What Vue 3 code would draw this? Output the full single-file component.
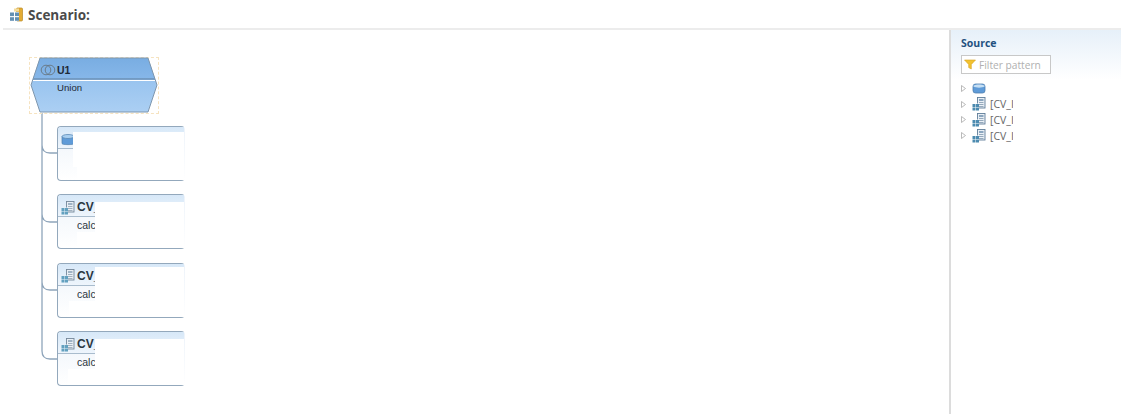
<script setup>
const cards = [
  { id: 'data', title: '', sub: '', icon: 'db' },
  { id: 'a', title: 'CV_', sub: 'calc', icon: 'calc' },
  { id: 'b', title: 'CV_', sub: 'calc', icon: 'calc' },
  { id: 'c', title: 'CV_', sub: 'calc', icon: 'calc' }
]

const sources = [
  { label: '', icon: 'db' },
  { label: '[CV_I', icon: 'calc' },
  { label: '[CV_I', icon: 'calc' },
  { label: '[CV_I', icon: 'calc' }
]
</script>

<template>
  <div class="page">
    <header class="title-bar">
      <svg class="title-icon" width="16" height="16" viewBox="0 0 16 16">
        <rect x="8.5" y="1" width="6" height="13" rx="1" fill="#e4ab32" stroke="#b98a25" stroke-width="0.7" />
        <rect x="6" y="1.5" width="5" height="3" fill="#f3dc9c" />
        <rect x="2" y="5" width="9" height="9" fill="#fff" />
        <g fill="#6390b3">
          <rect x="2" y="5.5" width="4" height="3.6" />
          <rect x="7" y="5.5" width="4" height="3.6" />
          <rect x="2" y="10.2" width="4" height="3.6" />
          <rect x="7" y="10.2" width="4" height="3.6" />
        </g>
      </svg>
      <span class="title-text">Scenario:</span>
    </header>

    <div class="workspace">
      <main class="canvas">
        <svg class="links" width="120" height="300" viewBox="0 0 120 300">
          <path
            d="M13 0V238Q13 246 21 246H28M13 32Q13 40 21 40H28M13 101Q13 109 21 109H28M13 169Q13 177 21 177H28"
            fill="none"
            stroke="#8fa5bb"
            stroke-width="1.3"
          />
        </svg>

        <div class="union">
          <svg class="union-shape" width="130" height="57" viewBox="0 0 130 57">
            <defs>
              <linearGradient id="unionLow" x1="0" y1="0" x2="0" y2="1">
                <stop offset="0" stop-color="#8cbcec" />
                <stop offset="1" stop-color="#abcff3" />
              </linearGradient>
              <linearGradient id="unionTop" x1="0" y1="0" x2="0" y2="1">
                <stop offset="0" stop-color="#79ade2" />
                <stop offset="1" stop-color="#86b7e9" />
              </linearGradient>
            </defs>
            <path d="M11 1H119L128 28L119 55H11L2 28Z" fill="url(#unionLow)" />
            <path d="M11 1H119L126 22H4Z" fill="url(#unionTop)" />
            <path d="M4 22H126" stroke="#5f7f9f" stroke-width="1" />
            <path d="M3 23.5H127" stroke="#fff" stroke-width="1.2" />
            <path d="M11 1H119L128 28L119 55H11L2 28Z" fill="none" stroke="#7f97ae" />
          </svg>
          <div class="union-head">
            <svg width="16" height="12" viewBox="0 0 16 12" fill="none" stroke="#66757f" stroke-width="0.9">
              <circle cx="6" cy="6" r="4.8" />
              <circle cx="10" cy="6" r="4.8" />
            </svg>
            <strong class="union-name">U1</strong>
          </div>
          <div class="union-sub">Union</div>
        </div>

        <div class="cards">
          <section v-for="card in cards" :key="card.id" class="card" :class="`card-${card.id}`">
            <div class="card-head">
              <svg v-if="card.icon === 'db'" class="card-icon db-icon" width="14" height="12" viewBox="0 0 14 12">
                <path d="M1 2.5V9.5C1 11 13 11 13 9.5V2.5Z" fill="#5f9bd8" stroke="#4f7fae" stroke-width="0.7" />
                <ellipse cx="7" cy="2.5" rx="6" ry="2" fill="#a9cff0" stroke="#4f7fae" stroke-width="0.7" />
              </svg>
              <svg v-else class="card-icon calc-icon" width="14" height="14" viewBox="0 0 14 14">
                <rect x="5.5" y="0.5" width="7.5" height="10.5" fill="#e9eff5" stroke="#74879a" stroke-width="0.9" />
                <rect x="7" y="2" width="4.5" height="2" fill="#9fb3c5" />
                <path d="M7 5.5h4.5M7 7.5h4.5M7 9.5h4.5" stroke="#8ea1b3" stroke-width="0.8" />
                <rect x="0" y="6.5" width="7" height="7.5" fill="#e6f0f9" />
                <g fill="#62a0bf">
                  <rect x="0.5" y="7" width="3" height="3" />
                  <rect x="4" y="7" width="3" height="3" />
                  <rect x="0.5" y="10.5" width="3" height="3" />
                  <rect x="4" y="10.5" width="3" height="3" />
                </g>
              </svg>
              <strong class="card-title">{{ card.title }}</strong>
            </div>
            <div class="card-sub">{{ card.sub }}</div>
            <div class="mask mask-top"></div>
            <div class="mask mask-low"></div>
          </section>
        </div>
      </main>

      <aside class="source">
        <h2 class="source-title">Source</h2>
        <div class="filter">
          <svg width="12" height="11" viewBox="0 0 12 11">
            <path d="M0.5 1H11.5L7.3 5.4V10L4.7 8.6V5.4Z" fill="#f2c230" stroke="#d6a11e" stroke-width="0.6" />
          </svg>
          <span>Filter pattern</span>
        </div>
        <ul class="tree">
          <li v-for="(item, i) in sources" :key="i" class="tree-row">
            <svg class="twisty" width="5" height="7" viewBox="0 0 5 7">
              <path d="M0.5 0.5L4.5 3.5L0.5 6.5Z" fill="#fff" stroke="#a8a8a8" stroke-width="0.8" />
            </svg>
            <svg v-if="item.icon === 'db'" class="tree-icon" width="14" height="11" viewBox="0 0 14 11">
              <rect x="1" y="1" width="12" height="9" rx="2.5" fill="#5f9bd8" stroke="#4f7fae" stroke-width="0.8" />
              <path d="M1.5 3.5C4 5 10 5 12.5 3.5V2.5C10 1 4 1 1.5 2.5Z" fill="#c5dff4" />
            </svg>
            <svg v-else class="tree-icon" width="14" height="14" viewBox="0 0 14 14">
              <rect x="5.5" y="0.5" width="7.5" height="10.5" fill="#e9eff5" stroke="#5f7d99" stroke-width="0.9" />
              <rect x="7" y="2" width="4.5" height="2" fill="#8ba6bf" />
              <path d="M7 5.5h4.5M7 7.5h4.5M7 9.5h4.5" stroke="#7f97ad" stroke-width="0.8" />
              <rect x="0" y="6.5" width="7" height="7.5" fill="#fff" />
              <g fill="#4d8bb0">
                <rect x="0.5" y="7" width="3" height="3" />
                <rect x="4" y="7" width="3" height="3" />
                <rect x="0.5" y="10.5" width="3" height="3" />
                <rect x="4" y="10.5" width="3" height="3" />
              </g>
            </svg>
            <span class="tree-label">{{ item.label }}</span>
          </li>
        </ul>
      </aside>
    </div>
  </div>
</template>

<style>
html,
body {
  margin: 0;
  background: #fff;
  overflow: hidden;
}
</style>

<style scoped>
.page {
  width: 1121px;
  height: 414px;
  display: flex;
  flex-direction: column;
  overflow: hidden;
  background: #fff;
}

.title-bar {
  flex: none;
  height: 30px;
  box-sizing: border-box;
  margin-left: 3px;
  padding: 1px 0 0 5px;
  display: flex;
  align-items: center;
  gap: 4px;
  border-bottom: 2px solid #ececec;
}

.title-icon {
  flex: none;
}

.title-text {
  font: bold 13.5px "Open Sans", sans-serif;
  color: #4a4a4a;
}

.workspace {
  flex: 1;
  display: flex;
  min-height: 0;
}

.canvas {
  position: relative;
  flex: 1;
  box-sizing: border-box;
  padding: 27px 0 0 29px;
}

.links {
  position: absolute;
  left: 29px;
  top: 83px;
}

.union {
  position: relative;
  width: 130px;
  height: 57px;
  box-sizing: border-box;
  outline: 1px dashed #f6e3c0;
  outline-offset: -1px;
  font-family: "Liberation Sans", sans-serif;
  font-size: 9.4px;
  color: #1f2a36;
}

.union-shape {
  position: absolute;
  left: 0;
  top: 0;
}

.union-head {
  position: absolute;
  left: 11px;
  top: 7px;
  display: flex;
  align-items: center;
  gap: 1px;
}

.union-name {
  font-size: 10.5px;
}

.union-sub {
  position: absolute;
  left: 28px;
  top: 25px;
  font-size: 9.6px;
}

.cards {
  margin: 12px 0 0 28px;
  display: flex;
  flex-direction: column;
  gap: 13.4px;
}

.card {
  position: relative;
  width: 128px;
  height: 55px;
  box-sizing: border-box;
  border: 1px solid #93a8bc;
  border-right-color: transparent;
  border-radius: 4px;
  background: linear-gradient(#edf3fa, #fff);
  font-family: "Liberation Sans", sans-serif;
  color: #2b3640;
}

.card-head {
  height: 22px;
  box-sizing: border-box;
  border-bottom: 1px solid #a9bccd;
  border-radius: 3px 0 0 0;
  background: linear-gradient(#d7e8f8, #eef5fc);
  display: flex;
  align-items: center;
  padding: 3px 0 0 3px;
}

.card-icon {
  flex: none;
}

.db-icon {
  margin-top: 2px;
}

.calc-icon {
  margin-top: 1px;
}

.card-title {
  font-size: 12px;
  margin-left: 2px;
}

.card-sub {
  font-size: 10.5px;
  margin: 2px 0 0 19px;
}

.mask {
  position: absolute;
  right: 0;
  background: #fff;
}

.mask-top {
  left: 37px;
  top: 7px;
  bottom: 13px;
}

.mask-low {
  left: 19px;
  top: 37px;
  bottom: 0;
}

.card-data .mask-top {
  left: 15px;
  top: 5px;
}

.card-b .mask-top {
  top: 3px;
}

.card-b .mask-low {
  left: 11px;
}

.card-c .mask-low {
  left: 10px;
}

.source {
  width: 172px;
  flex: none;
  box-sizing: border-box;
  border-left: 2px solid #dcdcdc;
  padding: 6px 0 0 10px;
  background: linear-gradient(#e6f0f9, #fff 50px);
  font-family: "Open Sans", sans-serif;
}

.source-title {
  margin: 0;
  font-size: 10.5px;
  line-height: 14px;
  font-weight: 700;
  color: #23517f;
}

.filter {
  width: 90px;
  height: 19px;
  box-sizing: border-box;
  margin-top: 5px;
  border: 1px solid #c8c8c8;
  background: #fff;
  display: flex;
  align-items: center;
  gap: 3px;
  padding-left: 2px;
  font-size: 10.2px;
  color: #b0b0b0;
}

.tree {
  list-style: none;
  margin: 7px 0 0;
  padding: 0;
}

.tree-row {
  height: 15.6px;
  display: flex;
  align-items: center;
  font-size: 10.5px;
  color: #666;
}

.twisty {
  flex: none;
  margin-right: 6px;
}

.tree-icon {
  flex: none;
}

.tree-label {
  margin-left: 4px;
  width: 23px;
  overflow: hidden;
  white-space: nowrap;
}
</style>
